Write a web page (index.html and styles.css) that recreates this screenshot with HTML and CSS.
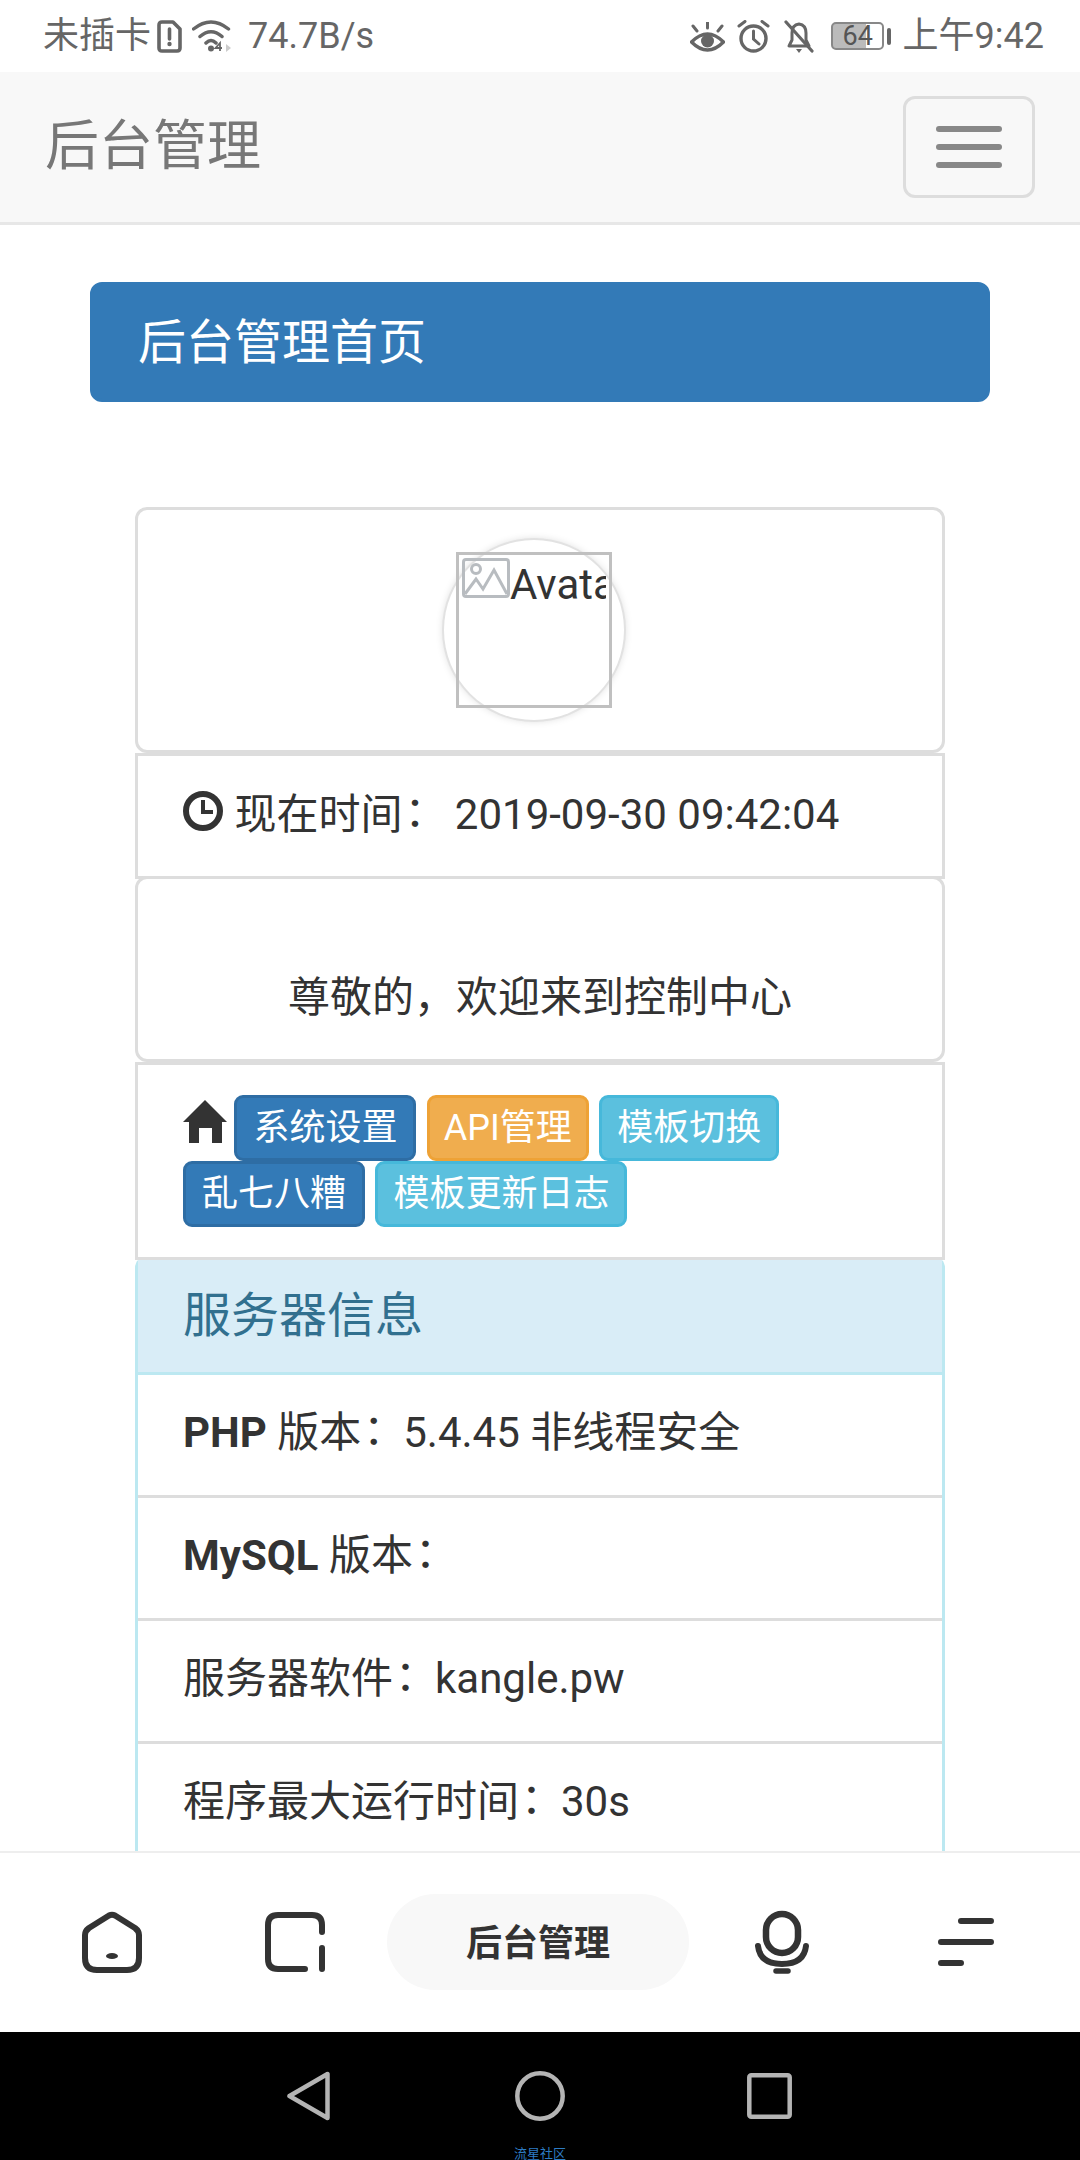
FILE: index.html
```html
<!DOCTYPE html>
<html lang="zh-CN">
<head>
<meta charset="utf-8">
<title>后台管理</title>
<link rel="stylesheet" href="styles.css">
</head>
<body>
<div class="screen">
  <header class="statusbar">
    <div class="status-left">
      <span class="carrier">未插卡</span>
      <svg class="ic-sim" viewBox="0 0 25 33"><path d="M5 2H16L23 9V28Q23 31 20 31H5Q2 31 2 28V5Q2 2 5 2Z" fill="none" stroke="#666" stroke-width="3.6" stroke-linejoin="round"/><path d="M12.500 9V19" stroke="#666" stroke-width="3.600" stroke-linecap="round"/><circle cx="12.500" cy="24" r="2.200" fill="#666"/></svg>
      <svg class="ic-wifi" viewBox="0 0 39 32"><path d="M1.500 9Q19 -5 36.500 9M8 16.500Q19 7 30 16.500M14 23Q19 18 24 23" fill="none" stroke="#666" stroke-width="3.500" stroke-linecap="round"/><circle cx="19" cy="28.500" r="3" fill="#666"/><path d="M28 31V23L23.500 28H30" fill="none" stroke="#666" stroke-width="1.800"/><path d="M34 24L39 28L34 32Z" fill="#ccc"/></svg>
      <span class="speed">74.7B/s</span>
    </div>
    <div class="status-right">
      <svg class="ic-eye" viewBox="0 0 35 30"><path d="M1.500 20Q17.500 4 33.500 20Q17.500 36 1.500 20Z" fill="none" stroke="#666" stroke-width="3.400" stroke-linejoin="round"/><circle cx="17.500" cy="19" r="6.500" fill="#666"/><path d="M17.500 0V6M3 4L7 9M32 4L28 9" stroke="#666" stroke-width="3" stroke-linecap="round"/></svg>
      <svg class="ic-alarm" viewBox="0 0 33 33"><circle cx="16.500" cy="18.500" r="12.500" fill="none" stroke="#666" stroke-width="3.400"/><path d="M16.500 11V19L22 24M2 6L8 1.500M31 6L25 1.500" fill="none" stroke="#666" stroke-width="3" stroke-linecap="round"/></svg>
      <svg class="ic-bell" viewBox="0 0 30 33"><path d="M5 26H25L22 20V13Q22 5 15 4Q8 5 8 13V20Z" fill="none" stroke="#666" stroke-width="3" stroke-linejoin="round"/><path d="M2 2L28 31" stroke="#666" stroke-width="3.200" stroke-linecap="round"/><path d="M12 29H18L15 33Z" fill="#666"/></svg>
      <div class="battery"><span class="battery-num">64</span></div>
      <span class="battery-tip"></span>
      <span class="clock">上午9:42</span>
    </div>
  </header>

  <nav class="navbar">
    <span class="brand">后台管理</span>
    <div class="toggle"><span></span><span></span><span></span></div>
  </nav>

  <main class="content">
    <div class="banner">后台管理首页</div>
    <div class="stack">
      <div class="item item-rounded item-avatar">
        <div class="avatar-ring">
          <div class="broken">
            <div class="broken-inner">
              <svg class="ic-broken" viewBox="0 0 48 40"><rect x="1.500" y="1.500" width="45" height="37" rx="2.500" fill="none" stroke="#b8bcc0" stroke-width="3"/><circle cx="14" cy="11" r="4.500" fill="none" stroke="#b8bcc0" stroke-width="3"/><path d="M3 36L14 21L21 31L32 12L45 36" fill="none" stroke="#b8bcc0" stroke-width="3"/></svg>
              <span>Avatar</span>
            </div>
          </div>
        </div>
      </div>
      <div class="item item-time">
        <svg class="ic-time" viewBox="0 0 40 40"><circle cx="20" cy="20" r="17" fill="none" stroke="#333" stroke-width="6"/><path d="M20 9V21H30" fill="none" stroke="#333" stroke-width="4"/></svg>
        现在时间<span class="cl" lang="zh-TW">：</span> 2019-09-30 09:42:04
      </div>
      <div class="item item-rounded item-welcome"><br>尊敬的，欢迎来到控制中心</div>
      <div class="item item-links">
        <svg class="ic-home" viewBox="0 0 44 43"><path d="M22 0L44 22H39V43H29V28H16V43H6V22H0Z" fill="#333"/></svg>
        <a class="btn btn-primary">系统设置</a>
        <a class="btn btn-warning">API管理</a>
        <a class="btn btn-info">模板切换</a>
        <a class="btn btn-primary">乱七八糟</a>
        <a class="btn btn-info">模板更新日志</a>
      </div>
      <section class="panel">
        <h3 class="panel-title">服务器信息</h3>
        <div class="row"><b>PHP</b> 版本<span class="cl" lang="zh-TW">：</span>5.4.45 非线程安全</div>
        <div class="row"><b>MySQL</b> 版本<span class="cl" lang="zh-TW">：</span></div>
        <div class="row">服务器软件<span class="cl" lang="zh-TW">：</span>kangle.pw</div>
        <div class="row">程序最大运行时间<span class="cl" lang="zh-TW">：</span>30s</div>
      </section>
    </div>
  </main>

  <footer class="tabbar">
    <svg class="ic-tab-home" viewBox="0 0 60 62"><path d="M3 24Q3 20 7 17L27 4.500Q30 3 33 4.500L53 17Q57 20 57 24V47Q57 59 45 59H15Q3 59 3 47Z" fill="none" stroke="#333" stroke-width="6" stroke-linejoin="round"/><ellipse cx="30" cy="45" rx="6" ry="3" fill="#333"/></svg>
    <svg class="ic-tab-square" viewBox="0 0 60 60"><path d="M57 20V13Q57 3 47 3H13Q3 3 3 13V47Q3 57 13 57H40M57 36V57" fill="none" stroke="#333" stroke-width="6" stroke-linecap="round"/></svg>
    <div class="tab-pill">后台管理</div>
    <svg class="ic-tab-mic" viewBox="0 0 56 64"><rect x="12" y="4" width="32" height="39" rx="16" fill="none" stroke="#333" stroke-width="6.500"/><path d="M4 36Q6 54 28 54Q50 54 52 36" fill="none" stroke="#333" stroke-width="6" stroke-linecap="round"/><path d="M22 61H34" stroke="#333" stroke-width="5.500" stroke-linecap="round"/></svg>
    <svg class="ic-tab-menu" viewBox="0 0 56 48"><path d="M23 3H53M3 24H53M3 45H23" stroke="#333" stroke-width="6" stroke-linecap="round"/></svg>
  </footer>

  <div class="sysnav">
    <div class="sysnav-keys">
      <svg class="ic-back" viewBox="0 0 43 50"><path d="M40.500 3V47L2.500 25Z" fill="none" stroke="#b4b4b4" stroke-width="4.500" stroke-linejoin="round"/></svg>
      <svg class="ic-circle" viewBox="0 0 50 50"><circle cx="25" cy="25" r="22.700" fill="none" stroke="#b4b4b4" stroke-width="4.500"/></svg>
      <svg class="ic-recent" viewBox="0 0 45 46"><rect x="2.300" y="2.300" width="40.400" height="41.400" rx="2" fill="none" stroke="#b4b4b4" stroke-width="4.500"/></svg>
    </div>
    <div class="watermark">流星社区</div>
  </div>
</div>
</body>
</html>
```

FILE: styles.css
```css
* { box-sizing: border-box; }
html, body { margin: 0; padding: 0; background: #fff; }
body {
  font-family: Roboto, "Noto Sans CJK SC", sans-serif;
  font-size: 42px;
  line-height: 60px;
  color: #333;
}
.screen {
  width: 1080px;
  height: 2160px;
  display: flex;
  flex-direction: column;
  overflow: hidden;
}

/* status bar */
.statusbar {
  flex: none;
  height: 72px;
  padding: 0 36px 0 43px;
  display: flex;
  justify-content: space-between;
  align-items: center;
  color: #666;
  font-size: 36px;
  line-height: 74px;
}
.status-left, .status-right { display: flex; align-items: center; }
.ic-sim { width: 25px; height: 33px; margin-left: 6px; }
.ic-wifi { width: 39px; height: 32px; margin-left: 10px; }
.speed { margin-left: 17px; }
.ic-eye { width: 35px; height: 30px; margin-top: 2px; }
.ic-alarm { width: 33px; height: 33px; margin-left: 12px; }
.ic-bell { width: 30px; height: 33px; margin-left: 14px; }
.battery {
  width: 53px;
  height: 28px;
  margin-left: 17px;
  border: 2px solid #888;
  border-radius: 5px;
  background: linear-gradient(to right, #bbb 68%, transparent 68%);
  display: flex;
  align-items: center;
  padding-left: 10px;
}
.battery-num { font-size: 27px; line-height: 24px; color: #555; }
.battery-tip {
  width: 4px;
  height: 17px;
  margin-left: 3px;
  border-radius: 2px;
  background: #666;
}
.clock { margin-left: 12px; }

/* navbar */
.navbar {
  flex: none;
  height: 153px;
  padding: 0 45px;
  background: #f8f8f8;
  border-bottom: 3px solid #e7e7e7;
  display: flex;
  justify-content: space-between;
  align-items: center;
  color: #777;
}
.brand { font-size: 54px; line-height: 58px; }
.toggle {
  width: 132px;
  height: 102px;
  border: 3px solid #ddd;
  border-radius: 12px;
  display: flex;
  flex-direction: column;
  align-items: center;
  justify-content: center;
  gap: 12px;
}
.toggle span {
  width: 66px;
  height: 6px;
  border-radius: 3px;
  background: #888;
}

/* main content */
.content {
  flex: 1;
  min-height: 0;
  overflow: hidden;
  padding: 57px 90px 0;
}
.banner {
  height: 120px;
  padding: 0 45px;
  background: #337ab7;
  border: 3px solid #337ab7;
  border-radius: 12px;
  color: #fff;
  font-size: 48px;
  line-height: 115px;
}
.stack { margin-top: 105px; padding: 0 45px; }
.item {
  position: relative;
  padding: 30px 45px;
  background: #fff;
  border: 3px solid #ddd;
}
.item-rounded { border-radius: 12px; }
.item-avatar { display: flex; justify-content: center; padding-right: 57px; }
.avatar-ring {
  width: 180px;
  height: 180px;
  border-radius: 50%;
  background: #fff;
  box-shadow: 0 0 0 2px #e2e2e2, 0 0 8px rgba(0, 0, 0, .18);
  display: flex;
  align-items: center;
  justify-content: center;
}
.broken {
  width: 156px;
  height: 156px;
  padding: 3px;
  border: 3px solid #c0c0c0;
  flex: none;
}
.broken-inner {
  height: 144px;
  overflow: hidden;
  white-space: nowrap;
  display: flex;
  align-items: flex-start;
  line-height: 54px;
}
.ic-broken { width: 48px; height: 40px; flex: none; }
.item-time { margin-bottom: -3px; padding: 29px 45px 31px; }
.ic-time { width: 40px; height: 40px; margin-right: 1px; vertical-align: -2px; }
.cl {
  display: inline-block;
  width: 42px;
  padding-left: 2px;
  font-family: "Noto Sans CJK TC", sans-serif;
  font-feature-settings: "palt";
  line-height: 0;
}
.item-welcome { text-align: center; padding: 29px 45px 31px; }
.item-links { z-index: 1; margin-bottom: -4px; }
.ic-home { width: 44px; height: 43px; margin-right: -3px; vertical-align: -4px; }
.btn {
  display: inline-block;
  vertical-align: middle;
  height: 66px;
  padding: 0 15px;
  border: 3px solid;
  border-radius: 9px;
  color: #fff;
  font-size: 36px;
  line-height: 60px;
}
.btn-primary { background: #337ab7; border-color: #2e6da4; padding: 0 16px; }
.btn-warning { background: #f0ad4e; border-color: #eea236; padding: 0 14px; }
.btn-info { background: #5bc0de; border-color: #46b8da; }

.panel {
  border: 3px solid #bce8f1;
  border-bottom: 0;
  border-radius: 12px 12px 0 0;
}
.panel-title {
  margin: 0;
  padding: 30px 45px;
  background: #d9edf7;
  border-bottom: 3px solid #bce8f1;
  color: #31708f;
  font-size: 48px;
  font-weight: 400;
  line-height: 53px;
}
.row {
  padding: 28px 45px 32px;
  border-bottom: 3px solid #ddd;
}

/* app tab bar */
.tabbar {
  flex: none;
  height: 181px;
  padding: 0 22px 2px 20px;
  background: #fff;
  border-top: 2px solid #eee;
  display: grid;
  grid-template-columns: 183px 183px 304px 184px 184px;
  align-items: center;
  justify-items: center;
}
.ic-tab-home { width: 60px; height: 62px; }
.ic-tab-square { width: 60px; height: 60px; }
.ic-tab-mic { width: 56px; height: 64px; }
.ic-tab-menu { width: 56px; height: 48px; }
.tab-pill {
  width: 302px;
  height: 96px;
  border-radius: 48px;
  background: #f8f8f8;
  text-align: center;
  font-size: 36px;
  font-weight: 700;
  line-height: 100px;
}

/* system nav */
.sysnav {
  flex: none;
  height: 128px;
  padding-top: 39px;
  background: #000;
  overflow: hidden;
}
.sysnav-keys {
  display: flex;
  justify-content: center;
  align-items: center;
  padding-right: 2px;
}
.ic-back { width: 43px; height: 50px; }
.ic-circle { width: 50px; height: 50px; margin: 0 182px 0 185px; }
.ic-recent { width: 45px; height: 46px; }
.watermark {
  margin-top: 25px;
  text-align: center;
  color: #2d7cc4;
  font-size: 13px;
  line-height: 16px;
}
```
